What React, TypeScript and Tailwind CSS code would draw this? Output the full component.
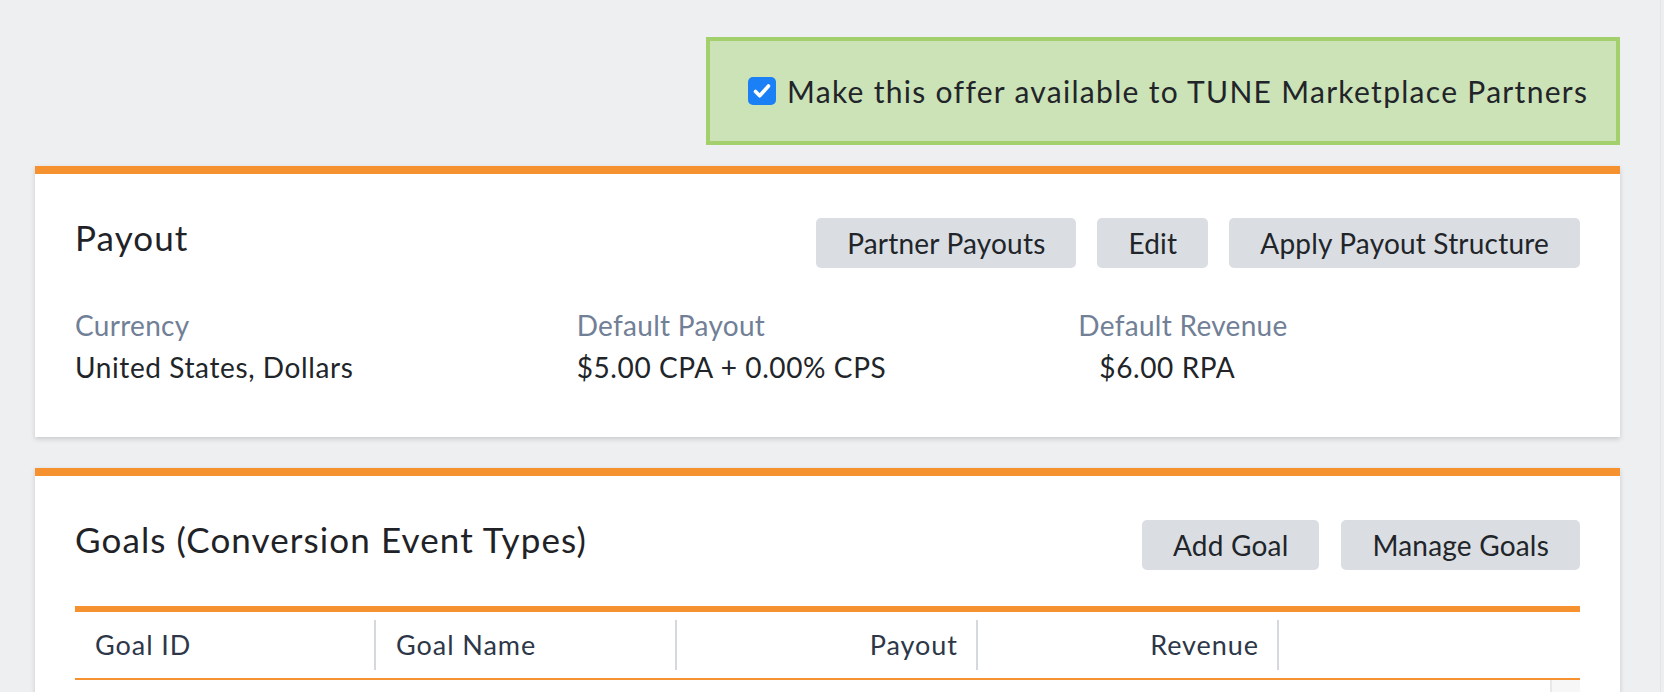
import React from "react"

const font = { fontFamily: "Lato, 'Noto Sans', sans-serif" }

const Button = ({ label }: { label: string }) => (
    <button className="h-[50px] px-[31px] rounded-[5px] bg-[#dadde2] text-[28px] tracking-[0.2px] text-[#212529] leading-none flex items-center">
        {label}
    </button>
)

const Stat = ({ label, value, indent }: { label: string; value: string; indent?: boolean }) => (
    <div className="flex flex-col">
        <p className="text-[28px] leading-[42px] tracking-[0.3px] text-[#718096]">{label}</p>
        <p className={`text-[28px] leading-[42px] tracking-[0.6px] text-[#212529] ${indent ? "pl-[21px]" : ""}`}>{value}</p>
    </div>
)

const HeaderCell = ({ label, right, last }: { label: string; right?: boolean; last?: boolean }) => (
    <div className="py-[8px]">
        <div className={`h-[50px] flex items-center pl-[20px] pr-[18px] text-[27px] tracking-[0.95px] text-[#2d3748] ${right ? "justify-end" : ""} ${last ? "" : "border-r-2 border-[#d5d8dc]"}`}>
            {label}
        </div>
    </div>
)

export default function App() {
    return (
        <div className="flex min-h-screen bg-[#eeeff1] overflow-hidden" style={font}>
            <div className="flex-1 pl-[35px] pr-[40px] pt-[37px]">
                <div className="flex justify-end">
                    <div className="w-[914px] h-[108px] border-4 border-[#a3cf6c] bg-[#cce2b7] flex items-center pl-[38px] gap-[11px]">
                        <div className="w-[28px] h-[28px] rounded-[5px] bg-[#1b7ff5] flex items-center justify-center">
                            <svg width="28" height="28" viewBox="0 0 28 28" fill="none">
                                <path d="M7.5 14.5l4.2 4.3L20.5 9" stroke="white" strokeWidth="3.6" strokeLinecap="round" strokeLinejoin="round" />
                            </svg>
                        </div>
                        <p className="text-[30px] leading-none tracking-[1.3px] text-[#212529] whitespace-nowrap">Make this offer available to TUNE Marketplace Partners</p>
                    </div>
                </div>

                <div className="mt-[21px] bg-white border-t-8 border-[#f5922f] shadow-[0_2px_5px_rgba(0,0,0,0.16)] px-[40px] pt-[44px] pb-[49px]">
                    <div className="flex justify-between items-start h-[50px]">
                        <p className="text-[35px] leading-none mt-[2px] tracking-[1.1px] text-[#1f2328]">Payout</p>
                        <div className="flex gap-[21px]">
                            <Button label="Partner Payouts" />
                            <Button label="Edit" />
                            <Button label="Apply Payout Structure" />
                        </div>
                    </div>
                    <div className="grid grid-cols-3 mt-[36px]">
                        <Stat label="Currency" value="United States, Dollars" />
                        <Stat label="Default Payout" value="$5.00 CPA + 0.00% CPS" />
                        <Stat label="Default Revenue" value="$6.00 RPA" indent />
                    </div>
                </div>

                <div className="mt-[31px] bg-white border-t-8 border-[#f5922f] shadow-[0_2px_5px_rgba(0,0,0,0.16)] px-[40px] pt-[44px]">
                    <div className="flex justify-between items-start h-[50px]">
                        <p className="text-[35px] leading-none mt-[2px] tracking-[1.1px] text-[#1f2328]">Goals (Conversion Event Types)</p>
                        <div className="flex gap-[22px]">
                            <Button label="Add Goal" />
                            <Button label="Manage Goals" />
                        </div>
                    </div>
                    <div className="mt-[36px] border-t-[6px] border-b-2 border-[#f5922f] grid grid-cols-5">
                        <HeaderCell label="Goal ID" />
                        <HeaderCell label="Goal Name" />
                        <HeaderCell label="Payout" right />
                        <HeaderCell label="Revenue" right />
                        <HeaderCell label="" last />
                    </div>
                    <div className="h-[60px] flex justify-end">
                        <div className="w-[30px] h-full bg-[#f7f7f7] border-l-2 border-[#e8e8e8]" />
                    </div>
                </div>
            </div>
            <div className="w-[4px] border-l border-[#e3e4e7]" />
        </div>
    )
}
